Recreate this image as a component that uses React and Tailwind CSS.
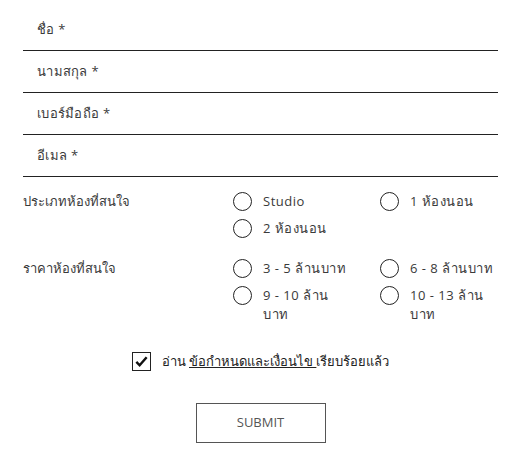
import { useState } from 'react';

const FONT = { fontFamily: '"Open Sans", "Noto Sans", sans-serif' };

function Field({ label }) {
  return (
    <div className="h-[42px] border-b border-[#222] flex items-center pl-[14px]">
      <span className="text-[13px] text-[#3a3a3a] tracking-[0.3px]">{label}</span>
    </div>
  );
}

function Radio({ label, checked, onClick }) {
  return (
    <label className="flex items-start gap-[11px] cursor-pointer" onClick={onClick}>
      <span className="w-[19px] h-[19px] shrink-0 rounded-full border-[1.5px] border-[#222] flex items-center justify-center">
        {checked && <span className="w-[9px] h-[9px] rounded-full bg-[#222]" />}
      </span>
      <span className="text-[13px] leading-[19px] text-[#3a3a3a] tracking-[0.5px] w-[88px]">{label}</span>
    </label>
  );
}

function RadioGroup({ title, options }) {
  const [value, setValue] = useState(null);
  return (
    <div className="flex">
      <div className="w-[210px] text-[13px] leading-[19px] text-[#3a3a3a]">{title}</div>
      <div className="grid grid-cols-[118px_118px] gap-x-[29px] gap-y-[8px]">
        {options.map((o) => (
          <Radio key={o} label={o} checked={value === o} onClick={() => setValue(o)} />
        ))}
      </div>
    </div>
  );
}

export default function App() {
  const [agree, setAgree] = useState(true);

  return (
    <div className="w-[521px] h-[461px] bg-white px-[23px] pt-[9px]" style={FONT}>
      {/* Text fields */}
      <Field label="ชื่อ *" />
      <Field label="นามสกุล *" />
      <Field label="เบอร์มือถือ *" />
      <Field label="อีเมล *" />

      {/* Radio groups */}
      <div className="mt-[15px] flex flex-col gap-[21px]">
        <RadioGroup title="ประเภทห้องที่สนใจ" options={['Studio', '1 ห้องนอน', '2 ห้องนอน']} />
        <RadioGroup
          title="ราคาห้องที่สนใจ"
          options={['3 - 5 ล้านบาท', '6 - 8 ล้านบาท', '9 - 10 ล้านบาท', '10 - 13 ล้านบาท']}
        />
      </div>

      {/* Terms */}
      <div className="mt-[28px] flex justify-center items-center gap-[11px]">
        <button
          onClick={() => setAgree(!agree)}
          className="w-[19px] h-[19px] border-[1.5px] border-[#222] flex items-center justify-center"
        >
          {agree && (
            <svg viewBox="0 0 16 16" className="w-[15px] h-[15px]">
              <path d="M2.5 8.5 L6 12 L13.5 3.5" fill="none" stroke="#111" strokeWidth="2.6" />
            </svg>
          )}
        </button>
        <span className="text-[13px] text-[#222]">
          อ่าน <span className="underline">ข้อกำหนดและเงื่อนไข </span>เรียบร้อยแล้ว
        </span>
      </div>

      {/* Submit */}
      <div className="mt-[31px] flex justify-center">
        <button className="w-[130px] h-[40px] border border-[#555] text-[13px] text-[#555]">
          SUBMIT
        </button>
      </div>
    </div>
  );
}
